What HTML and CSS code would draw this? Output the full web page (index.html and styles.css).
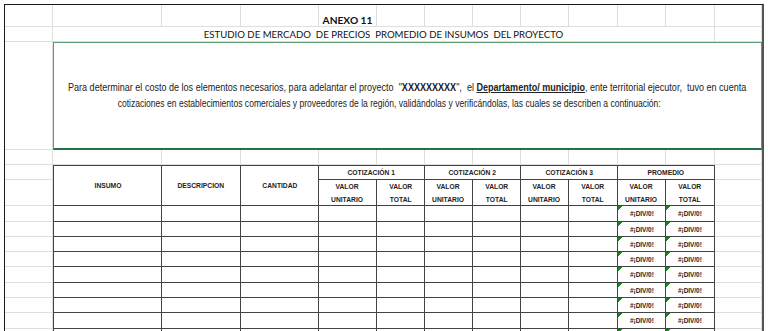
FILE: index.html
```html
<!DOCTYPE html>
<html lang="es">
<head>
<meta charset="utf-8">
<title>Anexo 11</title>
<link rel="stylesheet" href="styles.css">
</head>
<body>
<div class="sheet">
  <!-- row 1 -->
  <div class="c"></div><div class="c"></div><div class="c"></div><div class="c"></div>
  <div class="c anexo">ANEXO 11</div>
  <div class="c"></div><div class="c"></div><div class="c"></div><div class="c"></div><div class="c"></div><div class="c"></div><div class="c"></div><div class="c"></div>
  <!-- row 2 -->
  <div class="c"></div>
  <div class="c title">ESTUDIO DE MERCADO  DE PRECIOS  PROMEDIO DE INSUMOS  DEL PROYECTO</div>
  <div class="c"></div>
  <!-- row 3 -->
  <div class="c"></div>
  <div class="box">
    <p><span class="l1">Para determinar el costo de los elementos necesarios, para adelantar el proyecto  "<b>XXXXXXXXX</b>",  el <b class="u">Departamento/ municipio</b>, ente territorial ejecutor,  tuvo en cuenta</span><span class="l2">cotizaciones en establecimientos comerciales y proveedores de la región, validándolas y verificándolas, las cuales se describen a continuación:</span></p>
  </div>
  <!-- row 4 -->
  <div class="c"></div><div class="c"></div><div class="c"></div><div class="c"></div><div class="c"></div><div class="c"></div><div class="c"></div><div class="c"></div><div class="c"></div><div class="c"></div><div class="c"></div><div class="c"></div><div class="c"></div>
  <!-- header row 1 -->
  <div class="c"></div>
  <div class="h top tl rs2"><span>INSUMO</span></div>
  <div class="h top rs2"><span>DESCRIPCION</span></div>
  <div class="h top rs2"><span>CANTIDAD</span></div>
  <div class="h top cs2"><span>COTIZACIÓN 1</span></div>
  <div class="h top cs2"><span>COTIZACIÓN 2</span></div>
  <div class="h top cs2"><span>COTIZACIÓN 3</span></div>
  <div class="h top cs2"><span>PROMEDIO</span></div>
  <div class="c"></div>
  <!-- header row 2 -->
  <div class="c"></div>
  <div class="h"><span>VALOR<br>UNITARIO</span></div><div class="h"><span>VALOR<br>TOTAL</span></div>
  <div class="h"><span>VALOR<br>UNITARIO</span></div><div class="h"><span>VALOR<br>TOTAL</span></div>
  <div class="h"><span>VALOR<br>UNITARIO</span></div><div class="h"><span>VALOR<br>TOTAL</span></div>
  <div class="h"><span>VALOR<br>UNITARIO</span></div><div class="h"><span>VALOR<br>TOTAL</span></div>
  <div class="c"></div>
  <!-- data rows -->
  <div class="c"></div><div class="t tl"></div><div class="t"></div><div class="t"></div><div class="t"></div><div class="t"></div><div class="t"></div><div class="t"></div><div class="t"></div><div class="t"></div><div class="t err"><span>#¡DIV/0!</span></div><div class="t err"><span>#¡DIV/0!</span></div><div class="c"></div>
  <div class="c"></div><div class="t tl"></div><div class="t"></div><div class="t"></div><div class="t"></div><div class="t"></div><div class="t"></div><div class="t"></div><div class="t"></div><div class="t"></div><div class="t err"><span>#¡DIV/0!</span></div><div class="t err"><span>#¡DIV/0!</span></div><div class="c"></div>
  <div class="c"></div><div class="t tl"></div><div class="t"></div><div class="t"></div><div class="t"></div><div class="t"></div><div class="t"></div><div class="t"></div><div class="t"></div><div class="t"></div><div class="t err"><span>#¡DIV/0!</span></div><div class="t err"><span>#¡DIV/0!</span></div><div class="c"></div>
  <div class="c"></div><div class="t tl"></div><div class="t"></div><div class="t"></div><div class="t"></div><div class="t"></div><div class="t"></div><div class="t"></div><div class="t"></div><div class="t"></div><div class="t err"><span>#¡DIV/0!</span></div><div class="t err"><span>#¡DIV/0!</span></div><div class="c"></div>
  <div class="c"></div><div class="t tl"></div><div class="t"></div><div class="t"></div><div class="t"></div><div class="t"></div><div class="t"></div><div class="t"></div><div class="t"></div><div class="t"></div><div class="t err"><span>#¡DIV/0!</span></div><div class="t err"><span>#¡DIV/0!</span></div><div class="c"></div>
  <div class="c"></div><div class="t tl"></div><div class="t"></div><div class="t"></div><div class="t"></div><div class="t"></div><div class="t"></div><div class="t"></div><div class="t"></div><div class="t"></div><div class="t err"><span>#¡DIV/0!</span></div><div class="t err"><span>#¡DIV/0!</span></div><div class="c"></div>
  <div class="c"></div><div class="t tl"></div><div class="t"></div><div class="t"></div><div class="t"></div><div class="t"></div><div class="t"></div><div class="t"></div><div class="t"></div><div class="t"></div><div class="t err"><span>#¡DIV/0!</span></div><div class="t err"><span>#¡DIV/0!</span></div><div class="c"></div>
  <div class="c"></div><div class="t tl"></div><div class="t"></div><div class="t"></div><div class="t"></div><div class="t"></div><div class="t"></div><div class="t"></div><div class="t"></div><div class="t"></div><div class="t err"><span>#¡DIV/0!</span></div><div class="t err"><span>#¡DIV/0!</span></div><div class="c"></div>
  <div class="c"></div><div class="t tl"></div><div class="t"></div><div class="t"></div><div class="t"></div><div class="t"></div><div class="t"></div><div class="t"></div><div class="t"></div><div class="t"></div><div class="t err"><span>#¡DIV/0!</span></div><div class="t err"><span>#¡DIV/0!</span></div><div class="c"></div>
</div>
</body>
</html>
```
FILE: styles.css
```css
* { box-sizing: border-box; margin: 0; padding: 0; }
html, body { background: #fff; }
body { width: 768px; height: 331px; overflow: hidden; }

.sheet {
  margin: 4px 0 0 4px;
  width: 760px;
  border-top: 1px solid #1a1a1a;
  border-left: 1px solid #1a1a1a;
  border-right: 2px solid #555;
  display: grid;
  grid-template-columns: 48px 109px 79px 78px 58px 48px 48px 48px 48px 49px 48px 49px 47px;
  grid-template-rows: 22px 15px 108px 15px 15px 26px 16px 15px 15px 15px 16px 15px 15px 16px 15px;
}

.c {
  border-right: 1px solid #dedede;
  border-bottom: 1px solid #dedede;
}

.anexo {
  display: flex;
  align-items: flex-end;
  justify-content: center;
  font-family: Lato, "Liberation Sans", sans-serif;
  font-weight: bold;
  font-size: 10.2px;
  color: #111;
}

.title {
  grid-column: span 11;
  display: flex;
  align-items: center;
  justify-content: center;
  white-space: pre;
  font-family: Lato, "Liberation Sans", sans-serif;
  font-size: 9.6px;
  color: #111;
}

.box {
  grid-column: span 12;
  border: 1px solid #5b9c71;
  border-bottom: 2px solid #217346;
  display: flex;
  align-items: center;
  justify-content: center;
}
.box p {
  text-align: center;
  white-space: pre;
  font-family: "Liberation Sans", Arimo, sans-serif;
  font-size: 10px;
  line-height: 16px;
  color: #222;
}
.box .u { text-decoration: underline; }
.box .l1 { display: block; transform: scaleX(0.904); }
.box .l2 { display: block; padding-right: 42px; transform: scaleX(0.854); }

.h, .t {
  border-right: 1px solid #444;
  border-bottom: 1px solid #444;
}
.h {
  display: flex;
  align-items: center;
  justify-content: center;
  text-align: center;
  font-family: "Liberation Sans", Arimo, sans-serif;
  font-weight: bold;
  font-size: 8px;
  line-height: 13px;
  color: #222;
}
.h span { display: inline-block; transform: scaleX(0.84); }
.top { border-top: 1px solid #444; }
.tl { border-left: 1px solid #444; }
.rs2 { grid-row: span 2; }
.cs2 { grid-column: span 2; }

.err {
  display: flex;
  align-items: center;
  justify-content: center;
  font-family: "Liberation Sans", Arimo, sans-serif;
  font-weight: bold;
  font-size: 8px;
  color: #222;
  background: linear-gradient(135deg, #118a11 0, #118a11 3px, transparent 3px) no-repeat left top / 5px 5px;
}
.err span { display: inline-block; transform: scaleX(0.8); }
```
